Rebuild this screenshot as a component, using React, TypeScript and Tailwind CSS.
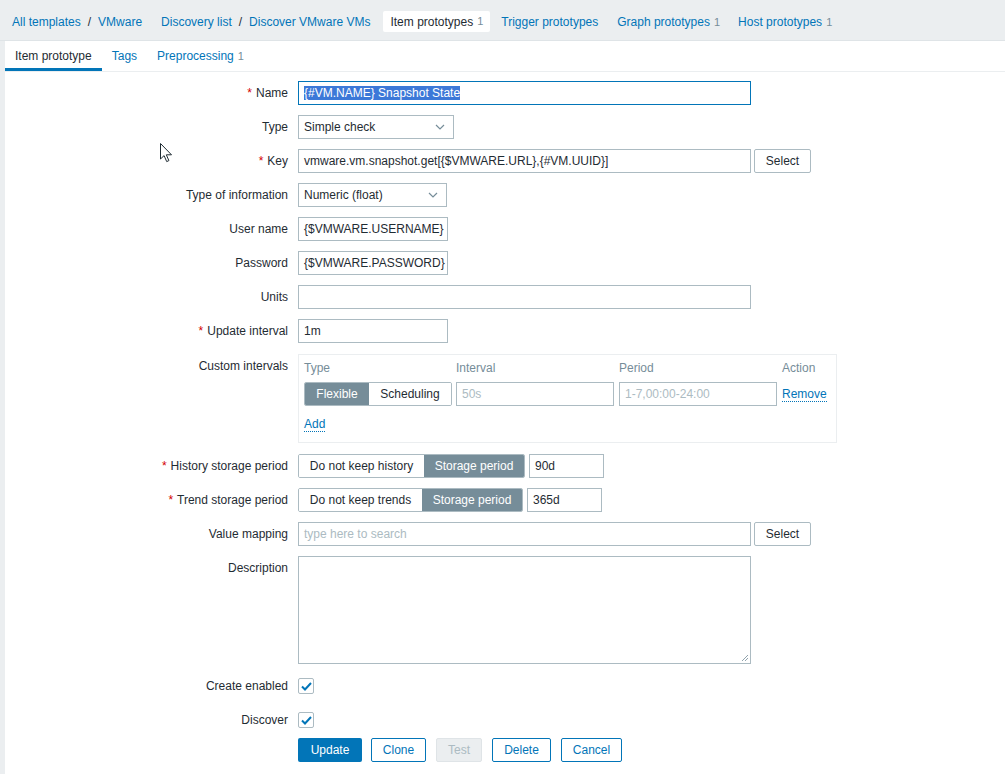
import React from "react";

const LINK = "text-[#0275b8]";

function Count({ n }: { n: number }) {
  return <span className="ml-[4px] text-[11px] text-[#768d99]">{n}</span>;
}

function Label({ text, required }: { text: string; required?: boolean }) {
  return (
    <div className="w-[293px] shrink-0 pr-[10px] text-right leading-[24px]">
      {required && <span className="mr-[4px] text-[#d40000]">*</span>}
      {text}
    </div>
  );
}

function Row({ label, required, children }: { label: string; required?: boolean; children: React.ReactNode }) {
  return (
    <div className="flex items-start">
      <Label text={label} required={required} />
      <div className="flex items-start gap-[3px]">{children}</div>
    </div>
  );
}

function TextBox({ value, width, placeholder }: { value?: string; width: string; placeholder?: string }) {
  return (
    <div
      className={`${width} h-[24px] overflow-hidden whitespace-nowrap border border-[#acbbc2] bg-white px-[5px] leading-[22px]`}
    >
      {value ? value : <span className="text-[#acbbc2]">{placeholder}</span>}
    </div>
  );
}

function Select({ value, width }: { value: string; width: string }) {
  return (
    <div className={`${width} flex h-[24px] items-center justify-between border border-[#acbbc2] bg-white pl-[5px] pr-[8px]`}>
      <span>{value}</span>
      <svg width="10" height="6" viewBox="0 0 10 6" fill="none">
        <path d="M1 1l4 4 4-4" stroke="#768d99" strokeWidth="1.2" />
      </svg>
    </div>
  );
}

function SmallButton({ text }: { text: string }) {
  return (
    <div className="flex h-[24px] w-[57px] items-center justify-center rounded-[2px] border border-[#acbbc2] bg-white">
      {text}
    </div>
  );
}

function Segmented({ items, active, widths }: { items: string[]; active: number; widths: string[] }) {
  return (
    <div className="flex h-[24px] overflow-hidden rounded-[2px] border border-[#acbbc2]">
      {items.map((t, i) => (
        <div
          key={t}
          className={`${widths[i]} flex items-center justify-center ${
            i === active ? "bg-[#768d99] text-white" : "bg-white text-[#1f2c33]"
          }`}
        >
          {t}
        </div>
      ))}
    </div>
  );
}

function Check() {
  return (
    <div className="mt-[4px] flex h-[16px] w-[16px] items-center justify-center rounded-[2px] border border-[#acbbc2] bg-white">
      <svg width="11" height="9" viewBox="0 0 11 9" fill="none">
        <path d="M1 4.5l3 3 6-6.5" stroke="#0275b8" strokeWidth="2" />
      </svg>
    </div>
  );
}

export default function App() {
  return (
    <div
      className="relative min-h-[774px] w-[1005px] bg-[#ebeef0] text-[12px] text-[#1f2c33]"
      style={{ fontFamily: '"Liberation Sans", Arial, sans-serif' }}
    >
      {/* breadcrumb nav */}
      <div className="flex h-[41px] items-center border-b border-[#dfe4e7] pl-[5px] pt-[3px]">
        <div className="flex items-center px-[7px]">
          <span className={LINK}>All templates</span>
          <span className="mx-[7px]">/</span>
          <span className={LINK}>VMware</span>
        </div>
        <div className="ml-[5px] flex items-center px-[7px]">
          <span className={LINK}>Discovery list</span>
          <span className="mx-[7px]">/</span>
          <span className={LINK}>Discover VMware VMs</span>
        </div>
        <div className="ml-[6px] flex h-[21px] items-center rounded-[2px] bg-white px-[7px]">
          <span className="text-[#1f2c33]">Item prototypes</span>
          <Count n={1} />
        </div>
        <div className="ml-[4px] px-[7px]">
          <span className={LINK}>Trigger prototypes</span>
        </div>
        <div className="ml-[5px] px-[7px]">
          <span className={LINK}>Graph prototypes</span>
          <Count n={1} />
        </div>
        <div className="ml-[4px] px-[7px]">
          <span className={LINK}>Host prototypes</span>
          <Count n={1} />
        </div>
      </div>

      {/* content */}
      <div className="ml-[5px] min-h-[733px] bg-white">
        <div className="flex h-[31px] border-b border-[#ebeef0]">
          <div className="flex items-center border-b-[3px] border-[#0275b8] px-[10px] pt-[3px]">Item prototype</div>
          <div className={`flex items-center px-[10px] ${LINK}`}>Tags</div>
          <div className="flex items-center px-[10px]">
            <span className={LINK}>Preprocessing</span>
            <Count n={1} />
          </div>
        </div>

        <div className="flex flex-col gap-[10px] pt-[9px]">
          <Row label="Name" required>
            <div className="h-[24px] w-[453px] overflow-hidden whitespace-nowrap border border-[#0275b8] bg-white px-[5px] leading-[22px]">
              <span className="bg-[#3c78d8] text-white">{"{#VM.NAME} Snapshot State"}</span>
            </div>
          </Row>
          <Row label="Type">
            <Select value="Simple check" width="w-[156px]" />
          </Row>
          <Row label="Key" required>
            <TextBox value="vmware.vm.snapshot.get[{$VMWARE.URL},{#VM.UUID}]" width="w-[453px]" />
            <SmallButton text="Select" />
          </Row>
          <Row label="Type of information">
            <Select value="Numeric (float)" width="w-[149px]" />
          </Row>
          <Row label="User name">
            <TextBox value="{$VMWARE.USERNAME}" width="w-[150px]" />
          </Row>
          <Row label="Password">
            <TextBox value="{$VMWARE.PASSWORD}" width="w-[150px]" />
          </Row>
          <Row label="Units">
            <TextBox value="" width="w-[453px]" />
          </Row>
          <Row label="Update interval" required>
            <TextBox value="1m" width="w-[150px]" />
          </Row>
          <div className="mt-[1px]">
            <Row label="Custom intervals">
              <div className="h-[89px] w-[539px] border border-[#ebeef0] px-[5px] pt-[4px]">
                <div className="flex h-[17px] text-[#768d99]">
                  <div className="w-[152px]">Type</div>
                  <div className="w-[163px]">Interval</div>
                  <div className="w-[163px]">Period</div>
                  <div>Action</div>
                </div>
                <div className="mt-[6px] flex items-center">
                  <Segmented items={["Flexible", "Scheduling"]} active={0} widths={["w-[64px]", "w-[82px]"]} />
                  <div className="ml-[4px]">
                    <TextBox placeholder="50s" width="w-[158px]" />
                  </div>
                  <div className="ml-[5px]">
                    <TextBox placeholder="1-7,00:00-24:00" width="w-[158px]" />
                  </div>
                  <span className={`ml-[5px] border-b border-dotted border-[#0275b8] leading-[14px] ${LINK}`}>Remove</span>
                </div>
                <div className="mt-[9px]">
                  <span className={`border-b border-dotted border-[#0275b8] leading-[14px] ${LINK}`}>Add</span>
                </div>
              </div>
            </Row>
          </div>
          <div className="mt-[1px]">
            <Row label="History storage period" required>
              <Segmented items={["Do not keep history", "Storage period"]} active={1} widths={["w-[125px]", "w-[100px]"]} />
              <div className="ml-[1px]">
                <TextBox value="90d" width="w-[75px]" />
              </div>
            </Row>
          </div>
          <Row label="Trend storage period" required>
            <Segmented items={["Do not keep trends", "Storage period"]} active={1} widths={["w-[123px]", "w-[100px]"]} />
            <div className="ml-[1px]">
              <TextBox value="365d" width="w-[75px]" />
            </div>
          </Row>
          <Row label="Value mapping">
            <TextBox placeholder="type here to search" width="w-[453px]" />
            <SmallButton text="Select" />
          </Row>
          <Row label="Description">
            <div className="relative h-[108px] w-[453px] border border-[#acbbc2] bg-white">
              <svg className="absolute bottom-[1px] right-[1px]" width="8" height="8" viewBox="0 0 8 8">
                <path d="M7 1L1 7M7 4L4 7" stroke="#768d99" strokeWidth="0.8" />
              </svg>
            </div>
          </Row>
          <Row label="Create enabled">
            <Check />
          </Row>
          <Row label="Discover">
            <Check />
          </Row>
          <div className="-mt-[4px] flex pl-[293px]">
            <div className="flex h-[24px] w-[64px] items-center justify-center rounded-[2px] bg-[#0275b8] text-white">Update</div>
            <div className={`ml-[9px] flex h-[24px] w-[55px] items-center justify-center rounded-[2px] border border-[#0275b8] ${LINK}`}>Clone</div>
            <div className="ml-[10px] flex h-[24px] w-[46px] items-center justify-center rounded-[2px] border border-[#dfe4e7] bg-[#ebeef0] text-[#acbbc2]">Test</div>
            <div className={`ml-[10px] flex h-[24px] w-[59px] items-center justify-center rounded-[2px] border border-[#0275b8] ${LINK}`}>Delete</div>
            <div className={`ml-[10px] flex h-[24px] w-[61px] items-center justify-center rounded-[2px] border border-[#0275b8] ${LINK}`}>Cancel</div>
          </div>
        </div>
      </div>

      {/* mouse cursor */}
      <svg className="absolute left-[160px] top-[143px]" width="13" height="20" viewBox="0 0 13 20">
        <path d="M0.5 0.5V16l3.6-3.4 2.6 6 2.2-1-2.6-5.8H11.5z" fill="white" stroke="#1f2c33" strokeWidth="1" />
      </svg>
    </div>
  );
}
